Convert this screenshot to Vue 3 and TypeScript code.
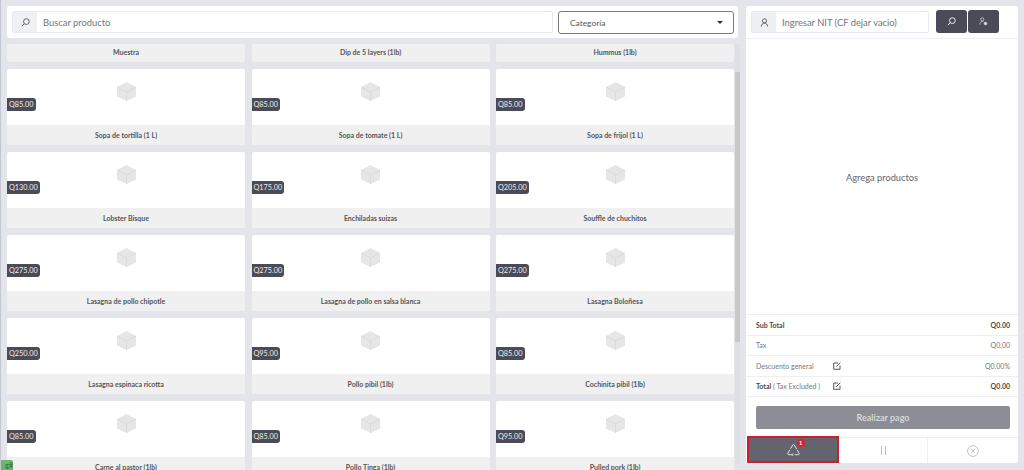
<script setup lang="ts">
interface Product { name: string; price?: string }
const products: Product[] = [
  { name: 'Muestra' }, { name: 'Dip de 5 layers (1lb)' }, { name: 'Hummus (1lb)' },
  { name: 'Sopa de tortilla (1 L)', price: 'Q85.00' }, { name: 'Sopa de tomate (1 L)', price: 'Q85.00' }, { name: 'Sopa de frijol (1 L)', price: 'Q85.00' },
  { name: 'Lobster Bisque', price: 'Q130.00' }, { name: 'Enchiladas suizas', price: 'Q175.00' }, { name: 'Souffle de chuchitos', price: 'Q205.00' },
  { name: 'Lasagna de pollo chipotle', price: 'Q275.00' }, { name: 'Lasagna de pollo en salsa blanca', price: 'Q275.00' }, { name: 'Lasagna Boloñesa', price: 'Q275.00' },
  { name: 'Lasagna espinaca ricotta', price: 'Q250.00' }, { name: 'Pollo pibil (1lb)', price: 'Q95.00' }, { name: 'Cochinita pibil (1lb)', price: 'Q85.00' },
  { name: 'Carne al pastor (1lb)', price: 'Q85.00' }, { name: 'Pollo Tinga (1lb)', price: 'Q85.00' }, { name: 'Pulled pork (1lb)', price: 'Q95.00' },
]
</script>

<template>
  <div class="page">
    <main class="left">
      <div class="searchbar">
        <div class="group search">
          <span class="addon">
            <svg width="9" height="9" viewBox="0 0 10 10" fill="none" stroke="#555" stroke-width="1"><circle cx="6" cy="4" r="3.2"/><path d="M3.6 6.4 1 9"/></svg>
          </span>
          <span class="placeholder">Buscar producto</span>
        </div>
        <div class="select">
          <span>Categoría</span>
          <i class="caret"></i>
        </div>
      </div>
      <div class="catalog">
        <div class="grid">
          <article v-for="p in products" :key="p.name" class="card" :class="{ bare: !p.price }">
            <div v-if="p.price" class="thumb">
              <svg class="box" width="21" height="21" viewBox="0 0 21 21">
                <path d="M10.5 1 20 6v9.5L10.5 20 1 15.5V6z" fill="#e6e6e6"/>
                <path d="M1 6l9.5 5L20 6M10.5 11v9" fill="none" stroke="#d6d6d6" stroke-width=".7"/>
              </svg>
              <span class="price">{{ p.price }}</span>
            </div>
            <div class="name">{{ p.name }}</div>
          </article>
        </div>
        <div class="scroll"><div class="thumbbar"></div></div>
      </div>
    </main>

    <aside class="right">
      <div class="customer">
        <div class="group nit">
          <span class="addon">
            <svg width="9" height="9" viewBox="0 0 10 10" fill="none" stroke="#555" stroke-width="1"><circle cx="5" cy="3.2" r="2.3"/><path d="M1.5 9.5c0-5 7-5 7 0"/></svg>
          </span>
          <span class="placeholder">Ingresar NIT (CF dejar vacio)</span>
        </div>
        <button class="dark">
          <svg width="9" height="9" viewBox="0 0 10 10" fill="none" stroke="#fff" stroke-width="1"><circle cx="6" cy="4" r="3.2"/><path d="M3.6 6.4 1 9"/></svg>
        </button>
        <button class="dark">
          <svg width="9" height="9" viewBox="0 0 10 10" fill="none" stroke="#ddd" stroke-width=".8"><circle cx="3.6" cy="2.6" r="1.8"/><path d="M1 8.5c0-3.6 3.2-4.2 4-3"/><circle cx="7.2" cy="7.2" r="1.5" fill="#ddd"/></svg>
        </button>
      </div>
      <div class="empty">Agrega productos</div>
      <div class="summary">
        <div class="row strong"><span>Sub Total</span><span>Q0.00</span></div>
        <div class="row"><span>Tax</span><span>Q0.00</span></div>
        <div class="row">
          <span class="label">Descuento general</span>
          <svg class="edit" width="8" height="8" viewBox="0 0 8 8" fill="none" stroke="#555" stroke-width="1"><path d="M5 1H.7v6.3H7V3.5"/><path d="M3.2 4.8 7.4.6"/></svg>
          <span class="value">Q0.00%</span>
        </div>
        <div class="row">
          <span class="label"><b>Total</b> ( Tax Excluded )</span>
          <svg class="edit" width="8" height="8" viewBox="0 0 8 8" fill="none" stroke="#555" stroke-width="1"><path d="M5 1H.7v6.3H7V3.5"/><path d="M3.2 4.8 7.4.6"/></svg>
          <span class="value strongv">Q0.00</span>
        </div>
      </div>
      <div class="paywrap"><button class="pay">Realizar pago</button></div>
      <div class="actions">
        <div class="action active">
          <span class="iconwrap">
            <svg width="13" height="12" viewBox="0 0 13 12" fill="none" stroke="#f0f0f0" stroke-width=".9" stroke-linejoin="round"><path d="M3.6 4.6 5.7 1.1c.4-.6 1.2-.6 1.6 0l2.4 4M10.2 6l1.9 3.2c.4.7 0 1.5-.8 1.5H7.8M5 10.7H1.7c-.8 0-1.2-.8-.8-1.5l2-3.4M6.4 9.5 5 10.7 6.4 11.8"/></svg>
            <span class="badge">1</span>
          </span>
        </div>
        <div class="action mid"><span class="pause"></span></div>
        <div class="action">
          <svg width="12" height="12" viewBox="0 0 12 12" fill="none" stroke="#bdbdc2" stroke-width=".9"><circle cx="6" cy="6" r="5.4"/><path d="M4.2 4.2l3.6 3.6M7.8 4.2 4.2 7.8"/></svg>
        </div>
      </div>
    </aside>
    <div class="tag">g#</div>
  </div>
</template>

<style>
html, body { margin: 0; background: #e4e5ea; }
</style>

<style scoped>
.page {
  position: relative;
  width: 1024px;
  height: 470px;
  box-sizing: border-box;
  padding: 6px 6px 7px 6px;
  display: flex;
  gap: 7px;
  overflow: hidden;
  background: #e4e5ea;
  border-left: 1px solid #c3c6d3;
  font-family: Lato, "Open Sans", sans-serif;
  color: #4a4a4a;
  font-size: 8px;
}
.left { width: 732px; flex: none; display: flex; flex-direction: column; gap: 6px; min-height: 0; margin-bottom: -2px; }
.searchbar {
  height: 32px; flex: none; box-sizing: border-box; width: 731px;
  background: #fff; border-radius: 3px;
  padding: 5px 4px 5px 5px;
  display: flex; gap: 5px;
}
.group { display: flex; height: 22px; border: 1px solid #e6e9ef; border-radius: 2px; box-sizing: border-box; }
.search { width: 541px; }
.addon { width: 24px; flex: none; background: #eef0f3; display: flex; align-items: center; justify-content: center; }
.placeholder { font-size: 9.4px; color: #6f7680; line-height: 22px; padding-left: 6px; white-space: nowrap; }
.select {
  flex: 1; height: 23px; box-sizing: border-box;
  border: 1px solid #7a7a7a; border-radius: 3px;
  display: flex; align-items: center; justify-content: space-between;
  padding: 0 10px 0 11px; font-size: 8.4px; color: #555;
}
.caret { border: 3px solid transparent; border-top-color: #333; border-bottom: 0; }
.catalog { flex: 1; display: flex; min-height: 0; overflow: visible; position: relative; }
.grid {
  width: 727px; flex: none; height: 426px; overflow: hidden;
  display: grid; grid-template-columns: repeat(3, 238px); column-gap: 6.5px; row-gap: 7.5px;
  align-content: start;
}
.card { background: #fff; border-radius: 2px; height: 75.5px; overflow: hidden; display: flex; flex-direction: column; position: relative; }
.card.bare { height: 17.5px; background: #f0f0f0; }
.thumb { height: 56px; flex: none; position: relative; display: flex; justify-content: center; padding-top: 12px; box-sizing: border-box; }
.box { display: block; }
.price {
  position: absolute; left: 0; top: 28.5px; height: 13px; padding: 0 2px;
  background: #4a4b57; color: #eee; font-size: 7.3px; line-height: 13px;
  border-radius: 0 3px 3px 0;
}
.name { flex: 1; background: #f0f0f0; text-align: center; font-size: 7px; line-height: 20px; font-weight: 700; color: #555; white-space: nowrap; }
.card.bare .name { line-height: 17px; }
.scroll { flex: none; width: 5px; background: #dedfe3; margin-left: 1px; height: 420px; }
.thumbbar { margin-top: 28px; height: 270px; background: #c8c8c8; }
.right {
  width: 272px; flex: none;
  background: #fff; border-radius: 3px;
  display: flex; flex-direction: column; overflow: hidden;
}
.customer {
  height: 33px; flex: none; box-sizing: border-box;
  border-bottom: 1px solid #f0f0f3;
  padding: 4px 5px; display: flex; gap: 1px;
}
.nit { width: 178px; margin-top: 1px; margin-right: 6px; }
.dark {
  width: 31px; height: 23px; background: #4a4b57; border: 0; border-radius: 3px; padding: 0;
  display: flex; align-items: center; justify-content: center;
}
.empty { flex: 1; display: flex; align-items: center; justify-content: center; font-size: 9.3px; color: #666; padding-top: 1px; }
.summary { flex: none; }
.row {
  height: 20.5px; box-sizing: border-box; border-top: 1px solid #efeff2;
  padding: 0 8px 0 10px; display: flex; justify-content: space-between; align-items: center;
  font-size: 7px; color: #777;
}
.row.strong { font-weight: 700; color: #4a4a4a; }
.label { width: 77px; white-space: nowrap; }
.label b { color: #4a4a4a; }
.edit { margin-right: auto; }
.value { color: #777; }
.strongv { font-weight: 700; color: #4a4a4a; }
.paywrap { height: 41px; flex: none; box-sizing: border-box; border-top: 1px solid #efeff2; padding: 9px 8px 0 10px; }
.pay {
  width: 100%; height: 23px; border: 0; border-radius: 2px;
  background: #8c8d95; color: #d5d5d8; font: 700 9px Lato, sans-serif;
}
.actions { height: 25px; flex: none; display: flex; border-top: 1px solid #efeff2; }
.action { flex: 1; display: flex; align-items: center; justify-content: center; border-left: 1px solid #efeff2; }
.action.mid { flex: none; width: 88px; border-left: 0; }
.action.active {
  flex: none; width: 92px; height: 27px; box-sizing: border-box; margin: -2px 0 0 1px;
  background: #63646e; border: 2px solid #c8202e; position: relative;
}
.iconwrap { position: relative; display: flex; }
.badge {
  position: absolute; top: -5px; left: 10px; width: 8px; height: 8px; border-radius: 50%;
  background: #d8232f; color: #fff; font-size: 5.5px; line-height: 8px; text-align: center; font-weight: 700;
}
.pause { width: 5px; height: 9px; border-left: 1px solid #bdbdc2; border-right: 1px solid #bdbdc2; box-sizing: border-box; }
.tag {
  position: absolute; left: -1px; bottom: 0; width: 13px; height: 10px;
  background: #6cb56c; color: #2f5f30; font-size: 7px; line-height: 11px; text-align: right;
  border-radius: 0 2px 0 0; overflow: hidden;
}
</style>
